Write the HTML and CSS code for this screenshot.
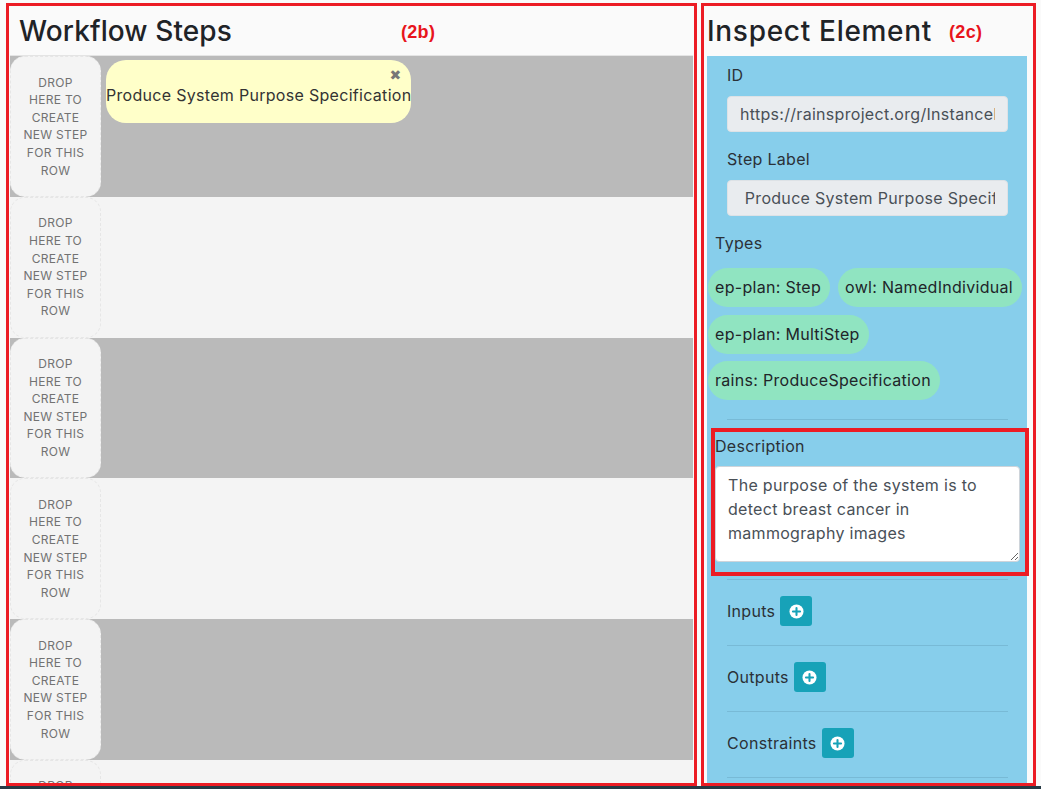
FILE: index.html
```html
<!DOCTYPE html>
<html lang="en">
<head>
<meta charset="utf-8">
<title>Workflow Steps</title>
<link rel="stylesheet" href="styles.css">
</head>
<body>
<div class="app">
  <section class="panel steps-panel">
    <header class="panel-header steps-header">
      <h1 class="panel-title">Workflow Steps</h1>
      <span class="tag">(2b)</span>
    </header>
    <div class="rows">
      <div class="row row-dark">
        <div class="drop">Drop<br>here to<br>create<br>new step<br>for this<br>row</div>
        <div class="step-card">
          <span class="close">&#10006;</span>
          <div class="step-text">Produce System Purpose Specification</div>
        </div>
      </div>
      <div class="row row-light">
        <div class="drop">Drop<br>here to<br>create<br>new step<br>for this<br>row</div>
      </div>
      <div class="row row-dark">
        <div class="drop">Drop<br>here to<br>create<br>new step<br>for this<br>row</div>
      </div>
      <div class="row row-light">
        <div class="drop">Drop<br>here to<br>create<br>new step<br>for this<br>row</div>
      </div>
      <div class="row row-dark">
        <div class="drop">Drop<br>here to<br>create<br>new step<br>for this<br>row</div>
      </div>
      <div class="row row-light">
        <div class="drop">Drop<br>here to<br>create<br>new step<br>for this<br>row</div>
      </div>
    </div>
  </section>

  <section class="panel inspect-panel">
    <header class="panel-header inspect-header">
      <h1 class="panel-title">Inspect Element</h1>
      <span class="tag">(2c)</span>
    </header>
    <div class="inspect-body">
      <div class="group">
        <div class="label">ID</div>
        <input class="field" type="text" readonly value="https://rainsproject.org/InstanceData/step/1">
      </div>
      <div class="group">
        <div class="label">Step Label</div>
        <input class="field" type="text" readonly value=" Produce System Purpose Specification">
      </div>
      <div class="group types-group">
        <div class="label types-label">Types</div>
        <div class="pills">
          <div class="pill-row"><span class="pill">ep-plan: Step</span><span class="pill">owl: NamedIndividual</span></div>
          <div class="pill-row"><span class="pill">ep-plan: MultiStep</span></div>
          <div class="pill-row"><span class="pill">rains: ProduceSpecification</span></div>
        </div>
      </div>
      <div class="divider divider-types"></div>
      <div class="desc-box">
        <div class="label desc-label">Description</div>
        <textarea class="desc-text">The purpose of the system is to detect breast cancer in mammography images</textarea>
      </div>
      <div class="divider divider-tight"></div>
      <div class="io-row">
        <span class="io-label">Inputs</span>
        <button class="add-btn" type="button" aria-label="Add input">
          <svg viewBox="0 0 16 16" width="15" height="15"><circle cx="8" cy="8" r="7.5" fill="#fff"/><path d="M8 4.2v7.6M4.2 8h7.6" stroke="#17a2b8" stroke-width="2.2" stroke-linecap="round"/></svg>
        </button>
      </div>
      <div class="divider"></div>
      <div class="io-row">
        <span class="io-label">Outputs</span>
        <button class="add-btn" type="button" aria-label="Add output">
          <svg viewBox="0 0 16 16" width="15" height="15"><circle cx="8" cy="8" r="7.5" fill="#fff"/><path d="M8 4.2v7.6M4.2 8h7.6" stroke="#17a2b8" stroke-width="2.2" stroke-linecap="round"/></svg>
        </button>
      </div>
      <div class="divider"></div>
      <div class="io-row">
        <span class="io-label">Constraints</span>
        <button class="add-btn" type="button" aria-label="Add constraint">
          <svg viewBox="0 0 16 16" width="15" height="15"><circle cx="8" cy="8" r="7.5" fill="#fff"/><path d="M8 4.2v7.6M4.2 8h7.6" stroke="#17a2b8" stroke-width="2.2" stroke-linecap="round"/></svg>
        </button>
      </div>
      <div class="divider"></div>
    </div>
  </section>
</div>
<div class="footer-bar"></div>
</body>
</html>
```

FILE: styles.css
```css
* {
  box-sizing: border-box;
}

html,
body {
  margin: 0;
  height: 789px;
  overflow: hidden;
}

body {
  background: #fafafa;
  font-family: Inter, "Open Sans", "DejaVu Sans", sans-serif;
  letter-spacing: 0.3px;
  color: #212529;
  display: flex;
  flex-direction: column;
}

.app {
  flex: none;
  height: 786px;
  display: flex;
  gap: 4px;
  padding: 3px 0 0 6px;
}

.panel {
  border: 3px solid #ec1c24;
  height: 783px;
  overflow: hidden;
  display: flex;
  flex-direction: column;
}

/* ---------- left: workflow steps ---------- */
.steps-panel {
  width: 691px;
  padding: 0 1px;
}

.panel-header {
  flex: none;
  background: #fafafa;
  display: flex;
  align-items: center;
}

.steps-header {
  height: 50px;
  border-bottom: 1px solid #e4e4e4;
  display: grid;
  grid-template-columns: 382px auto;
  padding-left: 9px;
}

.panel-title {
  margin: 0;
  font-size: 28px;
  font-weight: 500;
  line-height: 1;
  color: #1f2327;
  letter-spacing: 0.1px;
}

.inspect-header .panel-title {
  letter-spacing: 0.7px;
}

.tag {
  color: #e8141c;
  font: bold 18px "Liberation Sans", Arial, sans-serif;
  letter-spacing: 0.3px;
  padding-top: 3px;
}

.rows {
  flex: 1;
  overflow: hidden;
  display: flex;
  flex-direction: column;
}

.row {
  flex: none;
  height: 140.75px;
  display: flex;
  align-items: flex-start;
}

.row-dark {
  background: #bababa;
}

.row-light {
  background: #f4f4f4;
}

.drop {
  flex: none;
  width: 91px;
  height: 100%;
  border-radius: 15px;
  background: #f4f4f4;
  border: 1px dashed #e6e6e6;
  display: flex;
  align-items: center;
  justify-content: center;
  text-align: center;
  font-size: 12px;
  line-height: 17.6px;
  color: #727272;
  text-transform: uppercase;
}

.step-card {
  margin: 4px 0 0 5px;
  background: #ffffc9;
  border-radius: 20px;
  padding: 6px 0 16px;
}

.close {
  display: block;
  height: 17px;
  text-align: right;
  padding-right: 10px;
  font-size: 14px;
  line-height: 17px;
  color: #777;
}

.step-text {
  font-size: 16px;
  line-height: 24px;
  white-space: nowrap;
  color: #333;
}

/* ---------- right: inspect element ---------- */
.inspect-panel {
  width: 335px;
  padding: 0 6px 0 3px;
}

.inspect-header {
  height: 50px;
  gap: 17px;
}

.inspect-body {
  flex: 1;
  background: #87ceeb;
  padding: 7px 19px 0 20px;
}

.label {
  font-size: 16px;
  line-height: 24px;
  margin-bottom: 9px;
  color: #2b3137;
}

.group + .group {
  margin-top: 15px;
}

.field {
  display: block;
  width: 100%;
  height: 36px;
  border: 1px solid #dde2e6;
  border-radius: 4px;
  background: #e9ecef;
  font: 16px Inter, "Open Sans", sans-serif;
  letter-spacing: 0.3px;
  color: #495057;
  padding: 0 12px;
  outline: none;
}

.types-group {
  margin-top: 16px;
}

.types-label {
  margin-left: -12px;
  margin-bottom: 13px;
}

.pills {
  margin: 0 -19px 0 -19px;
  display: flex;
  flex-direction: column;
  gap: 7.5px;
}

.pill-row {
  display: flex;
  gap: 8px;
}

.pill {
  height: 39px;
  line-height: 39px;
  padding: 0 9px 0 7px;
  border-radius: 20px;
  background: #90e4c1;
  font-size: 16px;
  color: #212529;
  white-space: nowrap;
}

.divider {
  border-top: 1px solid #78bad6;
}

.divider-types {
  margin-top: 19px;
}

.desc-box {
  margin: 8px -21px 0 -16px;
  border: 4px solid #ec1c24;
  padding: 2px 5px 10px 0;
}

.desc-label {
  margin-bottom: 8px;
}

.desc-text {
  display: block;
  width: 100%;
  height: 96px;
  border: 1px solid #ced4da;
  border-radius: 4px;
  background: #fff;
  padding: 6px 12px;
  font: 16px/24px Inter, "Open Sans", sans-serif;
  letter-spacing: 0.3px;
  color: #495057;
  resize: vertical;
  outline: none;
}

.divider-tight {
  margin-top: 3px;
}

.io-row {
  display: flex;
  align-items: center;
  gap: 5px;
  padding: 16px 0 19px;
}

.io-label {
  font-size: 16px;
  line-height: 24px;
  color: #2b3137;
}

.add-btn {
  width: 32px;
  height: 30px;
  border: none;
  border-radius: 3px;
  background: #17a2b8;
  display: flex;
  align-items: center;
  justify-content: center;
  padding: 0;
}

.add-btn svg {
  display: block;
}

.footer-bar {
  flex: none;
  height: 3px;
  background: #263a45;
}
```
